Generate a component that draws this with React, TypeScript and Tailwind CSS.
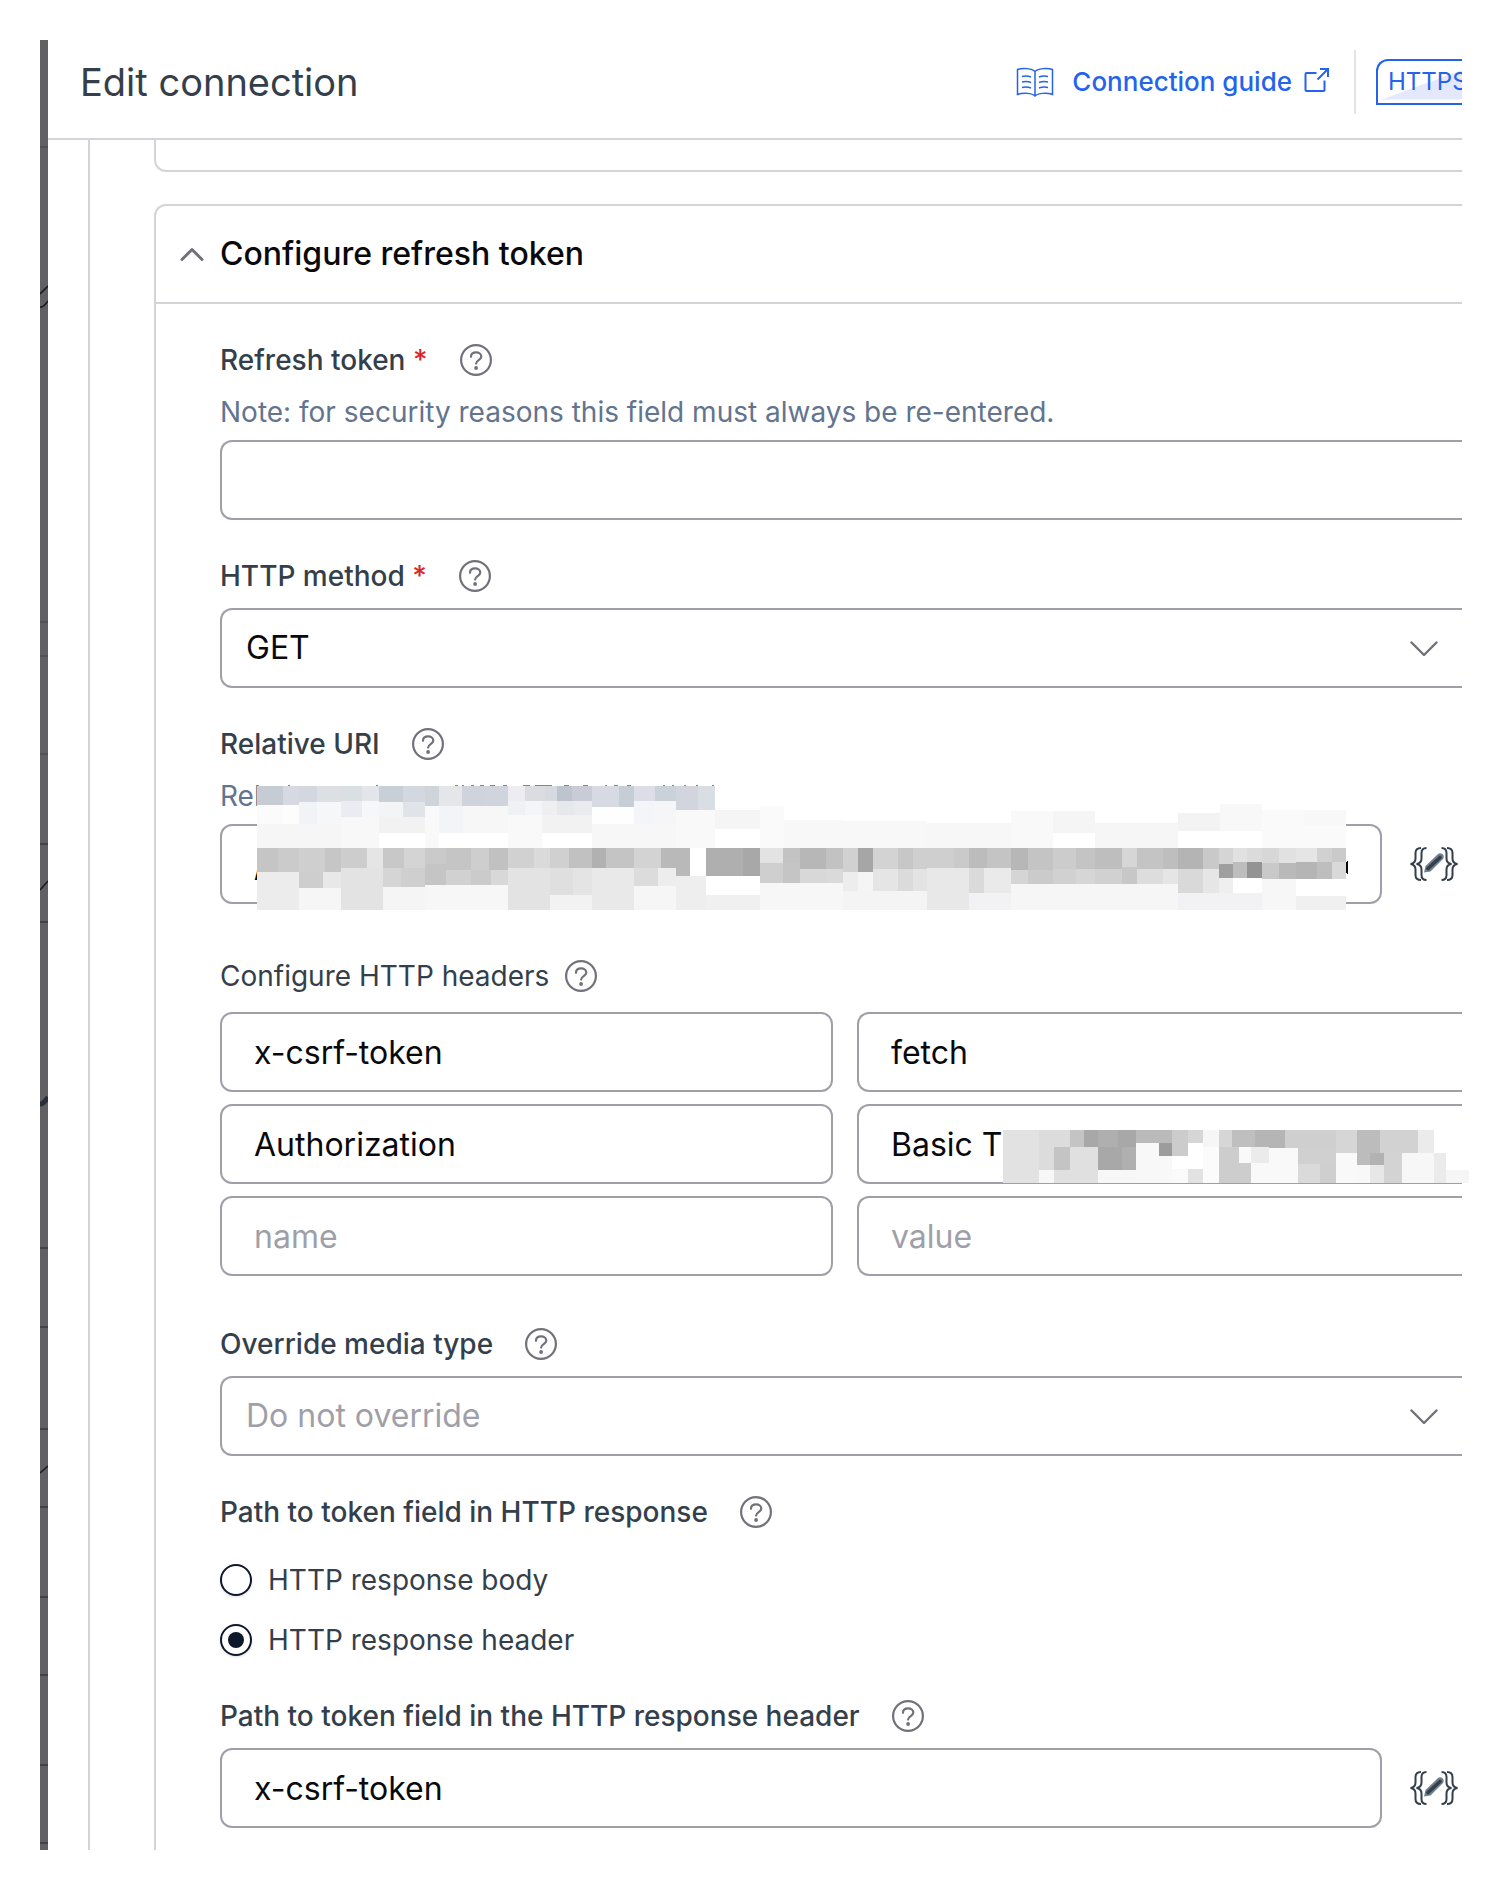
import type { ReactNode } from "react";

/* x, y, right, bottom, fill */
type Tile = [number, number, number, number, string];

const uriTilesLeft: Tile[] = [
  [171, 168, 249, 225, "#c5ccd3"], [249, 168, 297, 225, "#d6d9e2"], [297, 168, 351, 216, "#d3d7df"],
  [351, 168, 423, 216, "#dcdfe4"], [423, 168, 486, 213, "#dadfe3"], [486, 168, 537, 213, "#e2e6ea"],
  [537, 168, 609, 216, "#c9cfd7"], [609, 168, 675, 216, "#d3d7e0"], [675, 168, 717, 228, "#cfd3da"],
  [717, 168, 786, 228, "#e5e6ea"], [786, 168, 858, 228, "#cfd4dc"], [858, 168, 924, 228, "#d0d4dc"],
  [924, 168, 975, 213, "#ededf1"], [975, 168, 1035, 213, "#dadce1"], [1035, 168, 1071, 213, "#d7d9e1"],
  [1071, 168, 1116, 213, "#bdc4ce"], [1116, 168, 1176, 213, "#c9ccd6"], [1176, 168, 1257, 231, "#d8dae3"],
  [1257, 168, 1302, 231, "#c6cdd4"], [1302, 168, 1365, 213, "#dcdde6"], [1365, 168, 1428, 213, "#cbd1d8"],
  [1428, 168, 1494, 240, "#d2d5de"], [1494, 168, 1545, 240, "#d9dde4"],
  [171, 225, 249, 282, "#fbfbfb"], [249, 225, 297, 282, "#fdfdfd"], [297, 216, 351, 282, "#f1f3f6"],
  [351, 216, 423, 282, "#f6f7f9"], [423, 213, 486, 261, "#ebecf1"], [486, 213, 537, 261, "#f6f7fa"],
  [537, 216, 609, 261, "#f2f4f6"], [609, 216, 675, 261, "#e0e4e8"], [675, 228, 717, 354, "#f9f9fa"],
  [717, 228, 789, 309, "#f3f4f7"], [789, 228, 924, 309, "#f7f7f8"], [924, 213, 975, 255, "#f0f1f4"],
  [975, 213, 1026, 255, "#f4f5f8"], [1026, 213, 1071, 255, "#efeff1"], [1071, 213, 1122, 255, "#e7e8ec"],
  [1122, 213, 1176, 255, "#eaebef"], [1176, 231, 1302, 282, "#fefefe"], [1302, 213, 1365, 282, "#f4f5f8"],
  [1365, 213, 1428, 282, "#f6f6f9"], [1428, 240, 1545, 354, "#f9f9f9"],
  [171, 282, 423, 354, "#f6f6f6"], [423, 261, 537, 354, "#f8f8f8"], [537, 261, 675, 309, "#f2f2f2"],
  [537, 309, 675, 354, "#ffffff"], [717, 309, 924, 354, "#ffffff"], [924, 255, 1026, 354, "#f9f9f9"],
  [1026, 255, 1176, 309, "#f2f2f2"], [1026, 309, 1176, 354, "#ffffff"], [1176, 282, 1428, 354, "#f7f7f7"],
  [171, 354, 234, 426, "#c5c5c5"], [234, 354, 297, 426, "#cbcbcb"], [297, 354, 375, 426, "#cfcfcf"],
  [375, 354, 423, 426, "#c6c6c6"], [423, 354, 501, 414, "#cdcdcd"], [501, 354, 549, 414, "#e5e5e5"],
  [549, 354, 612, 414, "#c8c8c8"], [612, 354, 675, 414, "#d4d4d4"], [675, 354, 738, 402, "#cacaca"],
  [738, 354, 813, 420, "#c5c5c5"], [813, 354, 867, 420, "#cecece"], [867, 354, 924, 420, "#c1c1c1"],
  [924, 354, 1002, 414, "#d1d1d1"], [1002, 354, 1050, 414, "#dadada"], [1050, 354, 1107, 414, "#d0d0d0"],
  [1107, 354, 1176, 414, "#c1c1c1"], [1176, 354, 1218, 414, "#b1b1b1"], [1218, 354, 1302, 414, "#c4c4c4"],
  [1302, 354, 1383, 414, "#d3d3d3"], [1383, 354, 1428, 414, "#b9b9b9"], [1428, 354, 1470, 438, "#b9b9b9"],
  [1470, 354, 1518, 438, "#ffffff"],
  [171, 426, 297, 540, "#ececec"], [297, 426, 369, 474, "#cecece"], [369, 426, 423, 474, "#e8e8e8"],
  [297, 474, 423, 540, "#f6f6f6"], [423, 414, 549, 540, "#e3e3e3"], [549, 414, 603, 471, "#d5d5d5"],
  [603, 414, 675, 471, "#cfcfcf"], [549, 471, 675, 540, "#f5f5f5"], [675, 402, 738, 465, "#c5c5c5"],
  [738, 420, 813, 465, "#d1d1d1"], [813, 420, 873, 465, "#cbcbcb"], [873, 420, 924, 465, "#d8d8d8"],
  [675, 465, 924, 540, "#f7f7f7"], [924, 414, 1050, 540, "#e3e3e3"], [1050, 414, 1119, 495, "#dfdfdf"],
  [1119, 414, 1176, 495, "#e4e4e4"], [1050, 495, 1176, 540, "#f2f2f2"], [1176, 414, 1302, 540, "#e9e9e9"],
  [1302, 414, 1374, 468, "#dcdcdc"], [1374, 414, 1428, 468, "#ededed"], [1302, 468, 1428, 540, "#f6f6f6"],
  [1428, 438, 1518, 540, "#eeeeee"],
];

const uriTilesMiddle: Tile[] = [
  [45, 150, 180, 207, "#f5f5f5"], [45, 207, 180, 264, "#ffffff"], [180, 138, 252, 264, "#fafafa"],
  [252, 180, 429, 264, "#f8f8f8"], [429, 183, 681, 264, "#f8f8f8"], [681, 189, 933, 264, "#f7f7f7"],
  [933, 153, 1059, 264, "#f9f9f9"], [1059, 153, 1185, 219, "#f5f5f5"], [1059, 219, 1185, 264, "#ffffff"],
  [1185, 189, 1434, 264, "#f6f6f6"],
  [18, 264, 129, 348, "#afafaf"], [129, 264, 180, 348, "#a8a8a8"], [180, 264, 249, 309, "#e3e3e3"],
  [249, 264, 300, 309, "#c3c3c3"], [300, 264, 378, 327, "#b7b7b7"], [378, 264, 429, 327, "#c2c2c2"],
  [429, 264, 474, 336, "#d1d1d1"], [474, 264, 519, 336, "#a6a6a6"], [519, 264, 594, 327, "#d3d3d3"],
  [594, 264, 639, 327, "#c7c7c7"], [639, 264, 681, 327, "#cfcfcf"], [681, 264, 762, 324, "#cfcfcf"],
  [762, 264, 807, 324, "#cacaca"], [807, 264, 861, 324, "#bcbcbc"], [861, 264, 933, 324, "#c4c4c4"],
  [933, 264, 984, 330, "#b7b7b7"], [984, 264, 1059, 330, "#c4c4c4"], [1059, 264, 1128, 327, "#cccccc"],
  [1128, 264, 1185, 327, "#c4c4c4"],
  [18, 348, 180, 405, "#ffffff"], [18, 405, 180, 450, "#f0f0f0"], [180, 309, 249, 369, "#cfcfcf"],
  [249, 309, 300, 369, "#c5c5c5"], [300, 327, 378, 369, "#d8d8d8"], [378, 327, 429, 369, "#dadada"],
  [180, 369, 429, 450, "#f7f7f7"], [429, 336, 474, 393, "#ededed"], [474, 336, 519, 393, "#f5f5f5"],
  [519, 327, 594, 393, "#e5e5e5"], [594, 327, 639, 393, "#dbdbdb"], [639, 327, 681, 393, "#e3e3e3"],
  [429, 393, 681, 450, "#f4f4f4"], [681, 324, 807, 450, "#e8e8e8"], [807, 324, 852, 399, "#dadada"],
  [852, 324, 933, 399, "#eaeaea"], [807, 399, 933, 450, "#f2f2f4"], [933, 330, 984, 372, "#d5d5d5"],
  [984, 330, 1059, 372, "#cbcbcb"], [1059, 327, 1128, 372, "#d1d1d1"], [1128, 327, 1185, 372, "#d6d6d6"],
  [933, 372, 1434, 450, "#f6f6f6"],
];

const uriTilesRight: Tile[] = [
  [294, 159, 420, 213, "#f3f3f3"], [420, 132, 546, 213, "#f8f8f8"], [294, 213, 546, 264, "#ffffff"],
  [546, 150, 798, 264, "#fafafa"], [672, 150, 798, 195, "#f8f8f8"],
  [45, 264, 126, 327, "#bebebe"], [126, 264, 171, 321, "#d6d6d6"], [171, 264, 249, 327, "#c4c4c4"],
  [249, 264, 294, 327, "#bebebe"], [294, 264, 369, 327, "#b4b4b4"], [369, 264, 417, 327, "#c9c9c9"],
  [417, 264, 459, 312, "#d5d5d5"], [459, 264, 501, 306, "#e1e1e1"], [501, 264, 546, 306, "#dbdbdb"],
  [546, 264, 597, 309, "#d7d7d7"], [597, 264, 648, 309, "#e1e1e1"], [648, 264, 711, 306, "#e5e5e5"],
  [711, 264, 756, 306, "#d1d1d1"], [756, 264, 798, 306, "#cacaca"],
  [45, 327, 126, 372, "#d1d1d1"], [126, 321, 171, 372, "#c7c7c7"], [171, 327, 249, 372, "#dddddd"],
  [249, 327, 294, 372, "#e5e5e5"], [294, 327, 369, 399, "#d9d9d9"], [369, 327, 417, 399, "#e6e6e6"],
  [417, 312, 459, 354, "#9f9f9f"], [459, 306, 501, 354, "#bdbdbd"], [501, 306, 546, 354, "#939393"],
  [417, 354, 459, 399, "#efefef"], [459, 354, 546, 399, "#ffffff"], [546, 309, 597, 357, "#c9c9c9"],
  [597, 309, 648, 357, "#b9b9b9"], [648, 306, 711, 357, "#b5b5b5"], [711, 306, 756, 357, "#bebebe"],
  [756, 306, 798, 357, "#d9d9d9"], [294, 399, 546, 450, "#f2f2f4"], [546, 357, 648, 450, "#f7f7f7"],
  [648, 357, 798, 408, "#ffffff"], [648, 408, 798, 450, "#f0f0f0"],
];

const secretTiles: Tile[] = [
  [382, 390, 466, 549, "#e2e2e2"], [466, 390, 539, 441, "#dcdcdc"], [466, 441, 502, 510, "#dcdcdc"],
  [466, 510, 502, 549, "#f7f7f7"], [502, 441, 539, 510, "#c4c4c4"], [502, 510, 605, 549, "#e0e0e0"],
  [539, 390, 572, 441, "#c4c4c4"], [539, 441, 605, 510, "#e0e0e0"], [572, 390, 605, 441, "#a8a8a8"],
  [605, 390, 651, 441, "#afafaf"], [651, 390, 694, 441, "#a8a8a8"], [605, 441, 661, 510, "#a8a8a8"],
  [661, 441, 694, 510, "#b0b0b0"], [605, 510, 694, 549, "#f7f7f7"], [694, 390, 778, 429, "#bababa"],
  [694, 429, 748, 549, "#f8f8f8"], [748, 429, 778, 468, "#9c9c9c"], [748, 468, 778, 549, "#f8f8f8"],
  [778, 390, 816, 468, "#cccccc"], [816, 390, 851, 429, "#d6d6d6"], [816, 429, 851, 507, "#ffffff"],
  [778, 468, 816, 507, "#ffffff"], [778, 507, 816, 549, "#fafafa"], [816, 507, 851, 549, "#e2e2e2"],
  [851, 390, 888, 441, "#f6f6f6"], [851, 441, 888, 549, "#fbfbfb"], [888, 390, 919, 441, "#d6d6d6"],
  [888, 441, 963, 549, "#cdcdcd"], [919, 390, 973, 441, "#bfbfbf"], [973, 390, 1043, 444, "#b5b5b5"],
  [935, 441, 963, 489, "#f9f9f9"], [963, 441, 1005, 489, "#ebebeb"], [1005, 444, 1073, 549, "#f9f9f9"],
  [963, 489, 1005, 549, "#f9f9f9"], [1043, 390, 1163, 444, "#cfcfcf"], [1073, 444, 1163, 492, "#d0d0d0"],
  [1073, 492, 1125, 549, "#dadada"], [1125, 492, 1163, 549, "#cfcfcf"], [1163, 390, 1212, 459, "#d6d6d6"],
  [1163, 459, 1212, 549, "#f9f9f9"], [1212, 390, 1266, 459, "#bcbcbc"], [1212, 459, 1242, 495, "#bcbcbc"],
  [1242, 459, 1275, 495, "#b2b2b2"], [1212, 495, 1242, 549, "#f8f8f8"], [1242, 495, 1275, 549, "#e7e7e7"],
  [1266, 390, 1355, 459, "#d2d2d2"], [1275, 459, 1317, 549, "#d3d3d3"], [1317, 459, 1392, 549, "#f7f7f7"],
  [1355, 390, 1392, 459, "#ebebeb"], [1392, 459, 1420, 549, "#ebebeb"], [1420, 510, 1474, 549, "#f6f6f6"],
];

function Tiles({ tiles, transform }: { tiles: Tile[]; transform: string }) {
  return (
    <g transform={transform}>
      {tiles.map(([x, y, r, b, fill], i) => (
        <rect key={i} x={x} y={y} width={r - x} height={b - y} fill={fill} />
      ))}
    </g>
  );
}

function HelpButton({ topic }: { topic: string }) {
  return (
    <button type="button" aria-label={`Help: ${topic}`} className="size-8 shrink-0 text-zinc-500">
      <svg viewBox="0 0 32 32" className="size-8" fill="none" stroke="currentColor" strokeWidth="2.2">
        <circle cx="16" cy="16" r="14.900" />
        <path d="M11 12.800c0-2.800 2.200-4.400 5.100-4.400s5.200 1.600 5.200 4.200c0 3.500-5.200 3.500-5.200 7" strokeLinecap="round" />
        <circle cx="16.100" cy="24" r="1.900" fill="currentColor" stroke="none" />
      </svg>
    </button>
  );
}

function FieldLabel({ htmlFor, text, required }: { htmlFor?: string; text: string; required?: boolean }) {
  return (
    <div className="flex h-10 items-center gap-8">
      <label htmlFor={htmlFor} className="text-[28px] leading-10 font-medium text-[#343f4b]">
        {text}
        {required && <span className="text-[#dc2626]"> *</span>}
      </label>
      <HelpButton topic={text} />
    </div>
  );
}

function Dropdown({ id, value, muted }: { id: string; value: string; muted?: boolean }) {
  return (
    <div className="relative mt-3">
      <select
        id={id}
        className={
          "block h-20 w-full appearance-none rounded-l-xl border-2 border-r-0 border-zinc-400 bg-white pr-20 pl-6 text-[32px] " +
          (muted ? "text-zinc-400" : "text-zinc-950")
        }
      >
        <option>{value}</option>
      </select>
      <svg
        viewBox="0 0 28 16"
        className="pointer-events-none absolute top-8 right-6 h-4 w-7 text-zinc-500"
        fill="none"
        stroke="currentColor"
        strokeWidth="2.4"
        strokeLinecap="round"
        strokeLinejoin="round"
      >
        <path d="M1.500 2.500 14 15 26.500 2.500" />
      </svg>
    </div>
  );
}

function ExpressionButton() {
  return (
    <button type="button" aria-label="Open expression builder" className="h-9 w-12 shrink-0 text-[#343f4b]">
      <svg viewBox="0 0 48 36" className="h-9 w-12" fill="none" stroke="currentColor" strokeWidth="2">
        <path d="M11 2C7 2 5.500 3.500 5.500 7v5.500c0 3-1.500 5-5 5.500 3.500.5 5 2.500 5 5.500V29c0 3.500 1.500 5 5.500 5" />
        <path d="M16.500 2C13 2 11.500 3.500 11.500 7v5.500c0 3-1.500 5-5 5.500 3.500.5 5 2.500 5 5.500V29c0 3.500 1.500 5 5 5" />
        <path d="M37 2c4 0 5.500 1.500 5.500 5v5.500c0 3 1.500 5 5 5.500-3.500.5-5 2.500-5 5.500V29c0 3.500-1.500 5-5.500 5" />
        <path d="M31.500 2C35 2 36.500 3.500 36.500 7v5.500c0 3 1.500 5 5 5.500-3.500.5-5 2.500-5 5.500V29c0 3.500-1.500 5-5 5" />
        <path d="M15.500 20 28 8c3-2.500 7.500 1.500 5 5L20.500 25.500l-6.500 1z" fill="#708090" stroke="none" />
        <path d="M18 22.500 30 11.500" strokeWidth="3.600" strokeLinecap="round" />
      </svg>
    </button>
  );
}

const inputClass =
  "block h-20 w-full min-w-0 border-2 border-zinc-400 bg-white px-8 text-[32px] text-zinc-950 placeholder:text-zinc-400";

function HeaderRow({ index, name, value, children }: { index: number; name?: string; value?: string; children?: ReactNode }) {
  return (
    <div className="grid grid-cols-[613fr_605fr] gap-6">
      <input aria-label={`Header ${index} name`} placeholder="name" defaultValue={name} className={inputClass + " rounded-xl"} />
      <div className="relative">
        <input
          aria-label={`Header ${index} value`}
          placeholder="value"
          defaultValue={value}
          className={inputClass + " rounded-l-xl border-r-0"}
        />
        {children}
      </div>
    </div>
  );
}

function Radio({ id, label, checked }: { id: string; label: string; checked?: boolean }) {
  return (
    <div className="flex h-8 items-center gap-4">
      <input
        id={id}
        type="radio"
        name="token-location"
        defaultChecked={checked}
        className="grid size-8 appearance-none place-items-center rounded-full border-2 border-slate-900 shadow-sm before:size-4 before:rounded-full checked:before:bg-slate-900"
      />
      <label htmlFor={id} className="text-[28px] leading-10 text-[#343f4b]">
        {label}
      </label>
    </div>
  );
}

const faintTicks = [106, 581, 615, 713];
const darkTicks = [803, 881, 1207, 1286, 1388, 1466, 1556, 1634, 1724, 1802];

export default function App() {
  return (
    <div className="flex bg-white pt-10 pr-[47px] pb-10 pl-10 font-[Inter,sans-serif]">
      <aside className="relative w-2 shrink-0 overflow-hidden bg-[#616163]">
        <svg className="absolute top-0 left-0 h-[1810px] w-2" viewBox="0 0 8 1810" fill="none">
          {faintTicks.map((y) => (
            <rect key={y} y={y} width="8" height="2" fill="#525254" />
          ))}
          {darkTicks.map((y) => (
            <rect key={y} y={y} width="8" height="2" fill="#434345" />
          ))}
          <path d="M0 254l8-8M0 267q3 1 8-6M0 850l8-9M0 1433l8-7" stroke="#1c1c1e" strokeWidth="1.600" />
          <path d="M0 1064q4 0 8-7" stroke="#27303a" strokeWidth="5" />
        </svg>
      </aside>

      <main className="min-w-0 flex-1">
        <header className="flex h-[100px] items-center border-b-2 border-zinc-300 pb-3.5 pl-8">
          <h1 className="text-[38px] leading-[48px] text-[#343f4b]">Edit connection</h1>
          <a href="#guide" className="ml-auto flex items-center text-[26px] leading-10 font-medium text-[#2563eb]">
            <svg viewBox="0 0 38 30" className="mr-[18px] h-[30px] w-[38px]" fill="none" stroke="currentColor" strokeWidth="1.500">
              <path d="M19 4.500C16 1.500 7 .500 1.500 2.500v25C7 25.500 16 26 19 29c3-3 12-3.500 17.500-1.500v-25C31 .500 22 1.500 19 4.500zV29" />
              <path d="M6 9.500q5-1 9 .5M6 15q5-1 9 .5M6 20.500q5-1 9 .5M32 9.500q-5-1-9 .5M32 15q-5-1-9 .5M32 20.500q-5-1-9 .5" />
            </svg>
            Connection guide
            <svg viewBox="0 0 26 26" className="mb-1 ml-3 h-[26px] w-[26px]" fill="none" stroke="currentColor" strokeWidth="2">
              <path d="M12.500 6H2.500Q1.500 6 1.500 7v16q0 1 1 1h17q1 0 1-1V13.500M13.500 12.500 24 2M16 2h8v8" />
            </svg>
          </a>
          <div className="ml-6 h-16 w-0.5 bg-zinc-200" />
          <div className="relative ml-5 flex h-[46px] w-[86px] items-center overflow-hidden rounded-tl-xl border-2 border-r-0 border-[#2563eb]">
            <svg viewBox="0 0 84 42" className="absolute top-0 left-0 h-[42px] w-[84px]">
              <path d="M4 38.500 84 9v29.500z" fill="#e4e8fd" />
            </svg>
            <span className="relative pl-2.5 text-2xl text-[#2563eb]">HTTPS</span>
          </div>
        </header>

        <div className="ml-10 border-l-2 border-zinc-300 pl-16">
          <div className="h-8 rounded-bl-xl border-b-2 border-l-2 border-zinc-300" />

          <section className="mt-8 rounded-tl-xl border-t-2 border-l-2 border-zinc-300">
            <h2 className="border-b-2 border-zinc-300">
              <button type="button" aria-expanded="true" className="flex h-24 w-full items-center gap-4 pl-6 text-[32px] font-medium text-zinc-950">
                <svg viewBox="0 0 24 14" className="h-3.5 w-6 text-zinc-500" fill="none" stroke="currentColor" strokeWidth="3" strokeLinecap="round" strokeLinejoin="round">
                  <path d="M2 12.500 12 2.500l10 10" />
                </svg>
                Configure refresh token
              </button>
            </h2>

            <form className="pt-9 pb-[22px] pl-16">
              <FieldLabel htmlFor="refresh-token" text="Refresh token" required />
              <p className="mt-3 text-[28px] leading-10 text-slate-500">
                Note: for security reasons this field must always be re-entered.
              </p>
              <input id="refresh-token" className={inputClass + " mt-2 rounded-l-xl border-r-0"} />

              <div className="mt-9">
                <FieldLabel htmlFor="http-method" text="HTTP method" required />
                <Dropdown id="http-method" value="GET" />
              </div>

              <div className="mt-9">
                <FieldLabel htmlFor="relative-uri" text="Relative URI" />
                <div className="relative mt-3">
                  <p className="text-[28px] leading-10 text-slate-500">Rel</p>
                  <div className="mt-2 flex items-center gap-7 pr-1">
                    <input id="relative-uri" defaultValue="/" className={inputClass + " rounded-xl"} />
                    <ExpressionButton />
                  </div>
                  <svg
                    viewBox="257 782 1092 128"
                    className="pointer-events-none absolute top-1.5 left-[37px] h-32 w-[1092px]"
                    shapeRendering="crispEdges"
                  >
                    <Tiles tiles={uriTilesLeft} transform="translate(200 730) scale(0.33333)" />
                    <Tiles tiles={uriTilesMiddle} transform="translate(700 760) scale(0.33333)" />
                    <Tiles tiles={uriTilesRight} transform="translate(1080 760) scale(0.33333)" />
                    <path
                      d="M288 785h2M376 785h2M455 785h3M462 785h2M471 785h3M480 785h4M490 785h5M503 785h4M523 785h7M535 785h17M564 785h5M583 785h5M605 785h2M614 785h4M627 785h4M663 785h2M672 785h2M684 785h2M696 785h2M712 785h2"
                      stroke="#7c8799"
                      strokeWidth="1"
                    />
                    <path d="M1346 863q1-1.500 2-2v13q-1-.5-2-2z" fill="#09090b" />
                  </svg>
                </div>
              </div>

              <fieldset className="mt-[52px]">
                <legend className="flex h-10 items-center gap-4 text-[28px] leading-10 text-[#343f4b]">
                  Configure HTTP headers
                  <HelpButton topic="Configure HTTP headers" />
                </legend>
                <div className="mt-4 flex flex-col gap-3">
                  <HeaderRow index={1} name="x-csrf-token" value="fetch" />
                  <HeaderRow index={2} name="Authorization" value="Basic T">
                    <svg
                      viewBox="1003 1130 466 53"
                      className="pointer-events-none absolute top-[26px] -right-[7px] h-[53px] w-[466px]"
                      shapeRendering="crispEdges"
                    >
                      <Tiles tiles={secretTiles} transform="translate(840 1000) scale(0.42665 0.33333)" />
                    </svg>
                  </HeaderRow>
                  <HeaderRow index={3} />
                </div>
              </fieldset>

              <div className="mt-12">
                <FieldLabel htmlFor="media-type" text="Override media type" />
                <Dropdown id="media-type" value="Do not override" muted />
              </div>

              <div className="mt-9">
                <FieldLabel text="Path to token field in HTTP response" />
                <div role="radiogroup" aria-label="Path to token field in HTTP response" className="mt-8 flex flex-col gap-7">
                  <Radio id="response-body" label="HTTP response body" />
                  <Radio id="response-header" label="HTTP response header" checked />
                </div>
              </div>

              <div className="mt-10">
                <FieldLabel htmlFor="header-path" text="Path to token field in the HTTP response header" />
                <div className="mt-3 flex items-center gap-7 pr-1">
                  <input id="header-path" defaultValue="x-csrf-token" className={inputClass + " rounded-xl"} />
                  <ExpressionButton />
                </div>
              </div>
            </form>
          </section>
        </div>
      </main>
    </div>
  );
}
